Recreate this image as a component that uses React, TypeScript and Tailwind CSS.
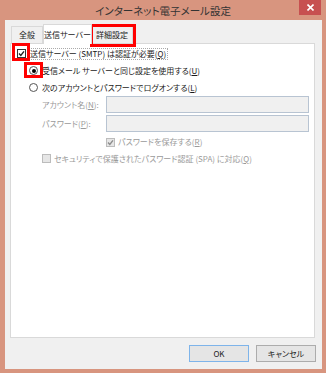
import React from "react";

const font = "[font-family:'Noto_Sans_CJK_JP',sans-serif] [font-feature-settings:'palt']";

function Check({ checked, disabled }: { checked?: boolean; disabled?: boolean }) {
  return (
    <span
      className={`flex w-[9px] h-[9px] shrink-0 items-center justify-center border ${
        disabled ? "border-[#bcbcbc] bg-[#e6e6e6]" : "border-[#333] bg-white"
      }`}
    >
      {checked && (
        <svg width="7" height="7" viewBox="0 0 7 7">
          <path
            d="M1 3.6 L2.8 5.4 L6 1.4"
            fill="none"
            stroke={disabled ? "#8c8c8c" : "#222"}
            strokeWidth="1.4"
          />
        </svg>
      )}
    </span>
  );
}

function Radio({ on }: { on?: boolean }) {
  return (
    <span className="flex w-[9px] h-[9px] shrink-0 items-center justify-center rounded-full border border-[#555] bg-white">
      {on && <span className="w-[4px] h-[4px] rounded-full bg-black" />}
    </span>
  );
}

function Key({ k }: { k: string }) {
  return (
    <>
      (<span className="underline underline-offset-1">{k}</span>)
    </>
  );
}

export default function App() {
  return (
    <div className={`relative w-[326px] h-[373px] bg-[#d8957f] flex flex-col ${font} text-[8px] leading-none text-[#1a1a1a] whitespace-nowrap`}>
      {/* title bar */}
      <div className="relative h-[20px] flex items-center justify-center shrink-0">
        <span className="text-[10.5px] text-[#333] pt-[3px]">インターネット電子メール設定</span>
        <div className="absolute right-[5px] top-0 w-[22px] h-[15px] bg-[#c75050] flex items-center justify-center">
          <svg width="7" height="7" viewBox="0 0 7 7">
            <path d="M0.5 0.5 L6.5 6.5 M6.5 0.5 L0.5 6.5" stroke="#fff" strokeWidth="1.6" />
          </svg>
        </div>
      </div>

      {/* client area */}
      <div className="flex-1 ml-[5px] mr-[4px] mb-[4px] bg-[#f0f0f0] flex flex-col">
        {/* tabs */}
        <div className="flex items-end h-[23px] pl-[6px] pt-[3px]">
          <div className="h-[17px] w-[32px] border border-b-0 border-[#d9d9d9] bg-[#f0f0f0] flex items-center justify-center">
            全般
          </div>
          <div className="relative z-10 h-[20px] w-[49px] border border-b-0 border-[#d9d9d9] bg-white flex items-center justify-center -mb-px">
            送信サーバー
          </div>
          <div className="h-[17px] w-[41px] border border-b-0 border-l-0 border-[#d9d9d9] bg-[#f0f0f0] flex items-center justify-center">
            詳細設定
          </div>
        </div>

        {/* panel */}
        <div className="ml-[5px] w-[305px] h-[295px] border border-[#d9d9d9] bg-white flex flex-col pt-[1px]">
          <div className="h-[17px] flex items-center pl-[6px] gap-[4px]">
            <Check checked />
            <span className="outline-1 outline-dotted outline-[#aaa] outline-offset-1">
              送信サーバー (SMTP) は認証が必要<Key k="Q" />
            </span>
          </div>
          <div className="h-[17px] flex items-center pl-[18px] gap-[4px]">
            <Radio on />
            <span>
              受信メール サーバーと同じ設定を使用する<Key k="U" />
            </span>
          </div>
          <div className="h-[17px] flex items-center pl-[18px] gap-[4px]">
            <Radio />
            <span>
              次のアカウントとパスワードでログオンする<Key k="L" />
            </span>
          </div>
          <div className="h-[17px] flex items-center pl-[31px] text-[#9a9a9a]">
            <span className="w-[64px]">
              アカウント名<Key k="N" />:
            </span>
            <div className="w-[203px] h-[17px] border border-[#b8c4d2] bg-[#f0f0f0]" />
          </div>
          <div className="h-[17px] mt-[2px] flex items-center pl-[31px] text-[#9a9a9a]">
            <span className="w-[64px]">
              パスワード<Key k="P" />:
            </span>
            <div className="w-[203px] h-[17px] border border-[#b8c4d2] bg-[#f0f0f0]" />
          </div>
          <div className="h-[16px] mt-[2px] flex items-center pl-[95px] gap-[3px] text-[#9a9a9a]">
            <Check checked disabled />
            <span>
              パスワードを保存する<Key k="R" />
            </span>
          </div>
          <div className="h-[17px] flex items-center pl-[31px] gap-[3px] text-[#9a9a9a]">
            <Check disabled />
            <span>
              セキュリティで保護されたパスワード認証 (SPA) に対応<Key k="Q" />
            </span>
          </div>
        </div>

        {/* buttons */}
        <div className="flex justify-end gap-[7px] pr-[6px] pt-[7px]">
          <button className="w-[60px] h-[17px] border border-[#7eb4ea] bg-[#e5e5e5] flex items-center justify-center">
            OK
          </button>
          <button className="w-[60px] h-[17px] border border-[#acacac] bg-[#e5e5e5] flex items-center justify-center">
            キャンセル
          </button>
        </div>
      </div>

      {/* red annotation boxes */}
      <div className="absolute left-[90px] top-[24px] w-[46px] h-[23px] border-[3px] border-[#ff0000]" />
      <div className="absolute left-[12px] top-[43px] w-[18px] h-[18px] border-[3px] border-[#ff0000]" />
      <div className="absolute left-[24px] top-[62px] w-[19px] h-[16px] border-[3px] border-[#ff0000]" />
    </div>
  );
}
